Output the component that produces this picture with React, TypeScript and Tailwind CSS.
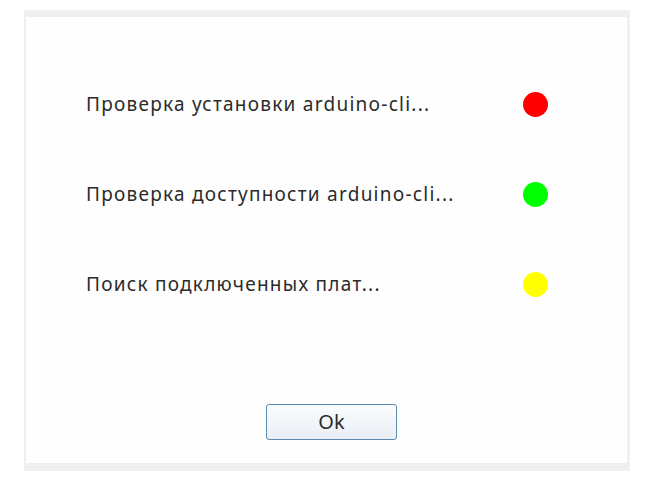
import React from 'react';

const checks = [
  { label: 'Проверка установки arduino-cli...', color: 'bg-[#ff0000]' },
  { label: 'Проверка доступности arduino-cli...', color: 'bg-[#00ff00]' },
  { label: 'Поиск подключенных плат...', color: 'bg-[#ffff00]' },
];

export default function App() {
  return (
    <div className="w-[651px] h-[483px] bg-white pt-[10px] pl-[24px]" style={{ fontFamily: '"Noto Sans", "DejaVu Sans", sans-serif' }}>
      <div className="w-[606px] h-[461px] bg-[#efefef] pt-[7px] pl-[2px] pr-[3px] pb-[8px]">
        <div className="h-full bg-[#fefefe] flex flex-col">
          {/* status rows */}
          <div className="flex flex-col pt-[75px] pl-[60px] pr-[79px] gap-[65px]">
            {checks.map((c) => (
              <div key={c.label} className="flex items-center justify-between h-[25px]">
                <span className="text-[19px] tracking-[1.25px] text-[#2b2b2b] leading-none">{c.label}</span>
                <div className={`w-[25px] h-[25px] rounded-full ${c.color}`} />
              </div>
            ))}
          </div>

          <div className="flex-1" />

          {/* ok button */}
          <div className="flex justify-center pb-[23px] pl-[10px]">
            <button className="w-[131px] h-[36px] rounded-[3px] border border-[#5a8bb5] bg-gradient-to-b from-[#fbfcfd] to-[#e9eef5] text-[20px] text-[#2b2b2b] leading-none">
              Ok
            </button>
          </div>
        </div>
      </div>
    </div>
  );
}
